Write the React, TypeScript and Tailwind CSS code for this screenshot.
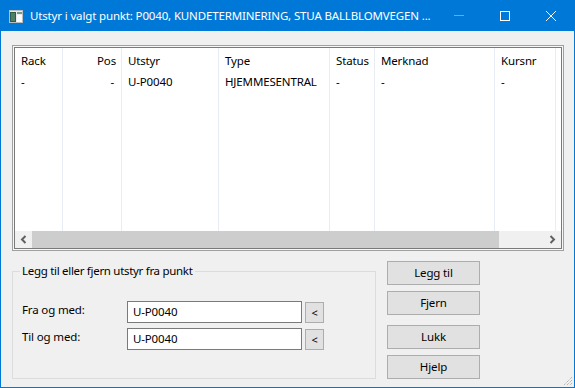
import React from "react";

type Column = {
  label: string;
  value: string;
  width: string;
  right?: boolean;
};

const columns: Column[] = [
  { label: "Rack", value: "-", width: "w-[48px]" },
  { label: "Pos", value: "-", width: "w-[59px]", right: true },
  { label: "Utstyr", value: "U-P0040", width: "w-[97px]" },
  { label: "Type", value: "HJEMMESENTRAL", width: "w-[111px]" },
  { label: "Status", value: "-", width: "w-[45px]" },
  { label: "Merknad", value: "-", width: "w-[120px]" },
  { label: "Kursnr", value: "-", width: "w-[61px]" },
];

// small window icon in the caption
const TitleIcon = () => (
  <svg width="14" height="13" viewBox="0 0 14 13">
    <rect x="0" y="0" width="14" height="13" fill="#b9bcc0" />
    <rect x="1" y="1" width="12" height="11" fill="#e9ecee" />
    <rect x="1" y="2" width="6" height="10" fill="#2f5d48" />
    <rect x="2" y="3" width="4" height="8" fill="#4f7f66" />
    <rect x="8" y="2" width="5" height="2" fill="#6f9f7e" />
    <rect x="8" y="5" width="5" height="7" fill="#fbfbfb" />
  </svg>
);

const Chevron = ({ dir }: { dir: "left" | "right" }) => (
  <svg width="7" height="9" viewBox="0 0 7 9">
    <path
      d={dir === "left" ? "M5.5 1 L2 4.5 L5.5 8" : "M1.5 1 L5 4.5 L1.5 8"}
      fill="none"
      stroke="#606060"
      strokeWidth="2"
    />
  </svg>
);

const DialogButton = ({ label }: { label: string }) => (
  <button className="w-[93px] h-[24px] bg-[#e1e1e1] border border-[#adadad] text-black leading-[16px]">
    {label}
  </button>
);

const FieldRow = ({ label, value }: { label: string; value: string }) => (
  <div className="flex items-start h-[22px]">
    <span className="w-[105px] mt-[1px] leading-[16px]">{label}</span>
    <div className="w-[175px] h-[22px] border border-[#7a7a7a] bg-white flex items-center pl-[5px]">
      {value}
    </div>
    <button className="ml-[3px] mt-[1px] w-[19px] h-[21px] bg-[#e1e1e1] border border-[#adadad] flex items-center justify-center text-[11px] leading-none">
      &lt;
    </button>
  </div>
);

export default function App() {
  return (
    <div className="w-[575px] h-[388px] bg-[#0078d7] px-px pb-px flex flex-col font-['Noto_Sans',sans-serif] text-[11.5px] tracking-[-0.15px] text-black">
      {/* title bar */}
      <div className="h-[31px] flex items-center text-white">
        <div className="ml-[8px] mt-px shrink-0">
          <TitleIcon />
        </div>
        <span className="ml-[7px] leading-[16px] whitespace-nowrap overflow-hidden min-w-0">
          Utstyr i valgt punkt: P0040, KUNDETERMINERING, STUA BALLBLOMVEGEN ...
        </span>
        <div className="ml-auto flex h-full shrink-0">
          <div className="w-[46px] h-full flex items-center justify-center">
            <div className="w-[10px] h-px bg-[#6ea6df]" />
          </div>
          <div className="w-[46px] h-full flex items-center justify-center">
            <div className="w-[10px] h-[10px] border border-white" />
          </div>
          <div className="w-[46px] h-full flex items-center justify-center">
            <svg width="10" height="10" viewBox="0 0 10 10">
              <path d="M0 0 L10 10 M10 0 L0 10" stroke="#ffffff" strokeWidth="1" />
            </svg>
          </div>
        </div>
      </div>

      {/* client area */}
      <div className="relative flex-1 bg-[#f0f0f0] pt-[14px] pl-[11px] pr-[10px]">
        {/* list view */}
        <div className="h-[206px] border border-[#a0a0a0] p-px bg-[#f7f7f7]">
          <div className="h-full border border-[#7a7a7a] bg-white flex flex-col">
            <div className="flex-1 flex">
              {columns.map((col) => (
                <div
                  key={col.label}
                  className={`${col.width} border-r border-[#e8edf5] flex flex-col`}
                >
                  <div
                    className={`h-[25px] flex items-center ${
                      col.right ? "justify-end pr-[5px]" : "pl-[6px]"
                    }`}
                  >
                    {col.label}
                  </div>
                  <div
                    className={`h-[18px] flex items-center whitespace-nowrap ${
                      col.right ? "justify-end pr-[7px]" : "pl-[6px]"
                    }`}
                  >
                    {col.value}
                  </div>
                </div>
              ))}
            </div>
            {/* horizontal scrollbar */}
            <div className="h-[17px] bg-[#f0f0f0] flex">
              <div className="w-[17px] flex items-center justify-center">
                <Chevron dir="left" />
              </div>
              <div className="w-[467px] bg-[#cdcdcd]" />
              <div className="flex-1" />
              <div className="w-[17px] flex items-center justify-center">
                <Chevron dir="right" />
              </div>
            </div>
          </div>
        </div>

        {/* bottom part */}
        <div className="flex items-start mt-[10px]">
          <fieldset className="w-[364px] h-[116px] mt-[2px] border border-[#dcdcdc] pl-[9px]">
            <legend className="ml-[-2px] px-[2px] leading-[16px] tracking-[-0.3px]">
              Legg til eller fjern utstyr fra punkt
            </legend>
            <div className="mt-[22px] flex flex-col gap-[5px]">
              <FieldRow label="Fra og med:" value="U-P0040" />
              <FieldRow label="Til og med:" value="U-P0040" />
            </div>
          </fieldset>

          <div className="ml-[11px] flex flex-col">
            <DialogButton label="Legg til" />
            <div className="mt-[6px]">
              <DialogButton label="Fjern" />
            </div>
            <div className="mt-[10px]">
              <DialogButton label="Lukk" />
            </div>
            <div className="mt-[6px]">
              <DialogButton label="Hjelp" />
            </div>
          </div>
        </div>

        {/* resize grip */}
        <svg
          className="absolute right-px bottom-px"
          width="11"
          height="11"
          viewBox="0 0 11 11"
        >
          <path
            d="M10 2 L2 10 M10 5 L5 10 M10 8 L8 10"
            stroke="#a0a0a0"
            strokeWidth="1"
            strokeDasharray="1 1"
          />
        </svg>
      </div>
    </div>
  );
}
